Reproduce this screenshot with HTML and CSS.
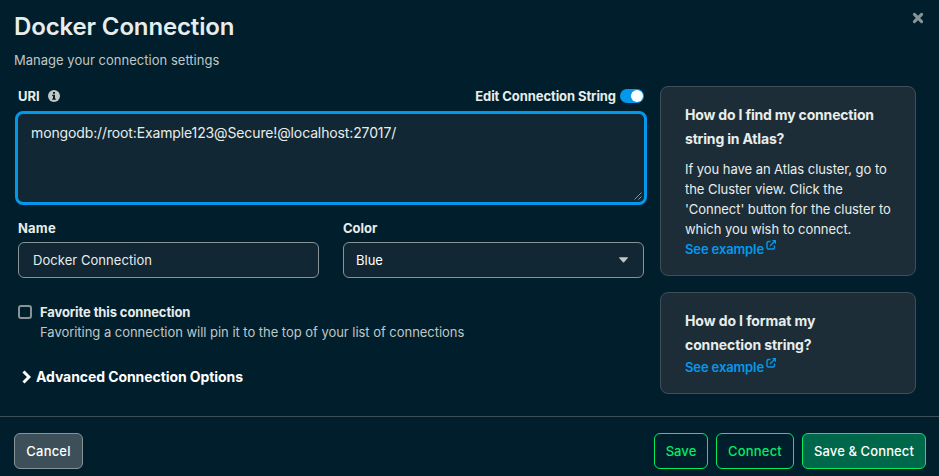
FILE: index.html
```
<!DOCTYPE html>
<html lang="en">
<head>
<meta charset="utf-8">
<title>Docker Connection</title>
<link rel="stylesheet" href="styles.css">
</head>
<body>
<div class="modal">
  <header class="header">
    <div>
      <h1 class="title">Docker Connection</h1>
      <p class="subtitle">Manage your connection settings</p>
    </div>
    <svg class="close" viewBox="0 0 10 10"><path d="M2 2 8 8M8 2 2 8"/></svg>
  </header>
  <main class="content">
    <section class="form">
      <div class="uri-head">
        <label class="label uri">URI</label>
        <svg class="info" viewBox="0 0 12 12"><circle cx="6" cy="6" r="6"/><path d="M5 2h2v1.700H5zM4.200 4.700H7v3.700h.8v1.300H4.200V8.400H5V6h-.8z"/></svg>
        <label class="label edit">Edit Connection String</label>
        <span class="toggle"></span>
      </div>
      <div class="uri-box"><span class="uri-text">mongodb://root:Example123@Secure!@localhost:27017/</span>
        <svg class="grip" viewBox="0 0 8 8"><path d="M.5 7.500l7-7M4.500 7.500l3-3"/></svg>
      </div>
      <div class="fields">
        <div class="field"><label class="label name">Name</label><div class="input"><span class="name-value">Docker Connection</span></div></div>
        <div class="field"><label class="label color">Color</label><div class="input select"><span class="color-value">Blue</span><svg class="caret" viewBox="0 0 10 6"><path d="M.5 0h9q.8 0 .3.7L5.600 5.500q-.6.7-1.200 0L.2.7Q-.3 0 .5 0z"/></svg></div></div>
      </div>
      <div class="favorite">
        <span class="checkbox"></span>
        <div><div class="label fav-title">Favorite this connection</div><div class="fav-help">Favoriting a connection will pin it to the top of your list of connections</div></div>
      </div>
      <div class="advanced"><svg class="chevron" viewBox="0 0 9 14"><path d="M1.500 1.500 7 7l-5.500 5.500"/></svg><span class="adv-text">Advanced Connection Options</span></div>
    </section>
    <aside class="help">
      <div class="card atlas">
        <h2 class="card-title">How do I find my connection<br>string in Atlas?</h2>
        <p class="card-body">If you have an Atlas cluster, go to<br>the Cluster view. Click the<br>'Connect' button for the cluster to<br>which you wish to connect.</p>
        <a class="link"><span class="link-text">See example</span><svg class="ext" viewBox="0 0 10 10"><path d="M4.500 1.500h-2q-1.500 0-1.500 1.500v4.500q0 1.500 1.500 1.500h4.500q1.500 0 1.500-1.500v-2M4 6l4-4"/><path class="tip" d="M5.800 0H10v4.200z"/></svg></a>
      </div>
      <div class="card format">
        <h2 class="card-title">How do I format my<br>connection string?</h2>
        <a class="link"><span class="link-text">See example</span><svg class="ext" viewBox="0 0 10 10"><path d="M4.500 1.500h-2q-1.500 0-1.500 1.500v4.500q0 1.500 1.500 1.500h4.500q1.500 0 1.500-1.500v-2M4 6l4-4"/><path class="tip" d="M5.800 0H10v4.200z"/></svg></a>
      </div>
    </aside>
  </main>
  <footer class="footer">
    <button class="btn cancel">Cancel</button>
    <button class="btn save">Save</button>
    <button class="btn connect">Connect</button>
    <button class="btn primary">Save &amp; Connect</button>
  </footer>
</div>
</body>
</html>
```
FILE: styles.css
```
* { box-sizing: border-box; margin: 0; padding: 0; }
body { background: #001e2b; color: #e8edeb; font: 13px/20px Inter, "Liberation Sans", sans-serif; white-space: nowrap; overflow: hidden; }
svg { display: block; flex: none; }
.modal { height: 476px; display: flex; flex-direction: column; }
.header { height: 86px; padding: 11px 15px 0 14px; display: flex; justify-content: space-between; }
.title { font-size: 24px; font-weight: 600; line-height: 32px; letter-spacing: -.14px; }
.subtitle { color: #c1c7c6; margin-top: 7px; letter-spacing: .02px; }
.close { width: 12px; height: 12px; margin-top: 1px; }
.close path { fill: none; stroke: #889397; stroke-width: 2.600; stroke-linecap: round; }
.content { flex: 1; display: flex; padding-left: 15px; gap: 13px; }
.form { width: 632px; }
.label { font-weight: 700; }
.uri-head { height: 25px; display: flex; align-items: flex-start; padding-left: 3px; }
.info { width: 12px; height: 12px; margin: 4px 0 0 8px; fill: #c1c7c6; }
.info path { fill: #001e2b; }
.edit { margin-left: auto; margin-right: 4px; letter-spacing: -.08px; }
.toggle { width: 24px; height: 14px; margin: 3px 3px 0 0; border-radius: 7px; background: #0498ec; display: flex; justify-content: flex-end; padding: 1px; }
.toggle::after { content: ""; width: 12px; height: 12px; border-radius: 50%; background: #fff; }
.uri-box { height: 94px; border: 3px solid #0498ec; border-radius: 8px; background: #112733; padding: 9px 13px; position: relative; }
.uri-text { font-size: 14px; letter-spacing: -.13px; }
.grip { position: absolute; right: 2px; bottom: 2px; width: 8px; height: 8px; }
.grip path { fill: none; stroke: #a9b1b3; stroke-width: .8; }
.fields { display: flex; gap: 24px; padding: 13px 0 0 3px; }
.field { width: 301px; }
.field .label { display: block; height: 24px; }
.name { letter-spacing: .2px; }
.input { height: 36px; border: 1px solid #889397; border-radius: 6px; background: #112733; padding: 0 14px; display: flex; align-items: center; }
.name-value { letter-spacing: .05px; }
.select { padding: 0 15px 0 12px; justify-content: space-between; }
.color-value { color: #fff; }
.caret { width: 9px; height: 6px; fill: #c1c7c6; }
.favorite { display: flex; gap: 8px; padding: 24px 0 0 3px; }
.checkbox { width: 14px; height: 14px; border: 2px solid #889397; border-radius: 3px; margin-top: 3px; }
.fav-title { letter-spacing: -.11px; }
.fav-help { color: #c1c7c6; letter-spacing: -.035px; }
.advanced { display: flex; align-items: center; gap: 5px; margin-top: 25px; padding-left: 7px; color: #fff; font-weight: 700; }
.adv-text { font-size: 14px; letter-spacing: -.08px; }
.chevron { width: 9px; height: 14px; }
.chevron path { fill: none; stroke: #fff; stroke-width: 3; }
.help { width: 256px; display: flex; flex-direction: column; gap: 16px; }
.card { border: 1px solid #3d4f58; border-radius: 8px; background: #1c2d38; padding: 16px 24px 0; }
.atlas { height: 190px; }
.format { height: 102px; }
.card-title { font-size: 14px; line-height: 24px; font-weight: 700; letter-spacing: -.18px; }
.format .card-title { letter-spacing: -.1px; }
.card-body { margin-top: 8px; line-height: 20px; letter-spacing: -.05px; }
.link { color: #0498ec; font-weight: 600; display: flex; line-height: 20px; letter-spacing: -.12px; }
.ext { width: 10px; height: 10px; margin: 1px 0 0 2px; }
.ext path { fill: none; stroke: #0498ec; stroke-width: 1.400; }
.ext .tip { fill: #0498ec; stroke: none; }
.footer { height: 60px; border-top: 1px solid #3d4f58; padding: 16px 13px 0 14px; display: flex; gap: 8px; }
.btn { height: 36px; border-radius: 6px; border: 1px solid #00ed64; background: #001e2b; color: #00ed64; font: 500 13px/20px Inter, "Liberation Sans", sans-serif; text-align: center; letter-spacing: .06px; }
.cancel { width: 69px; margin-right: auto; background: #3d4f58; border-color: #889397; color: #fff; letter-spacing: .2px; }
.save { width: 54px; }
.connect { width: 78px; letter-spacing: .2px; }
.primary { width: 124px; background: #00684a; color: #fff; letter-spacing: .1px; }
```
